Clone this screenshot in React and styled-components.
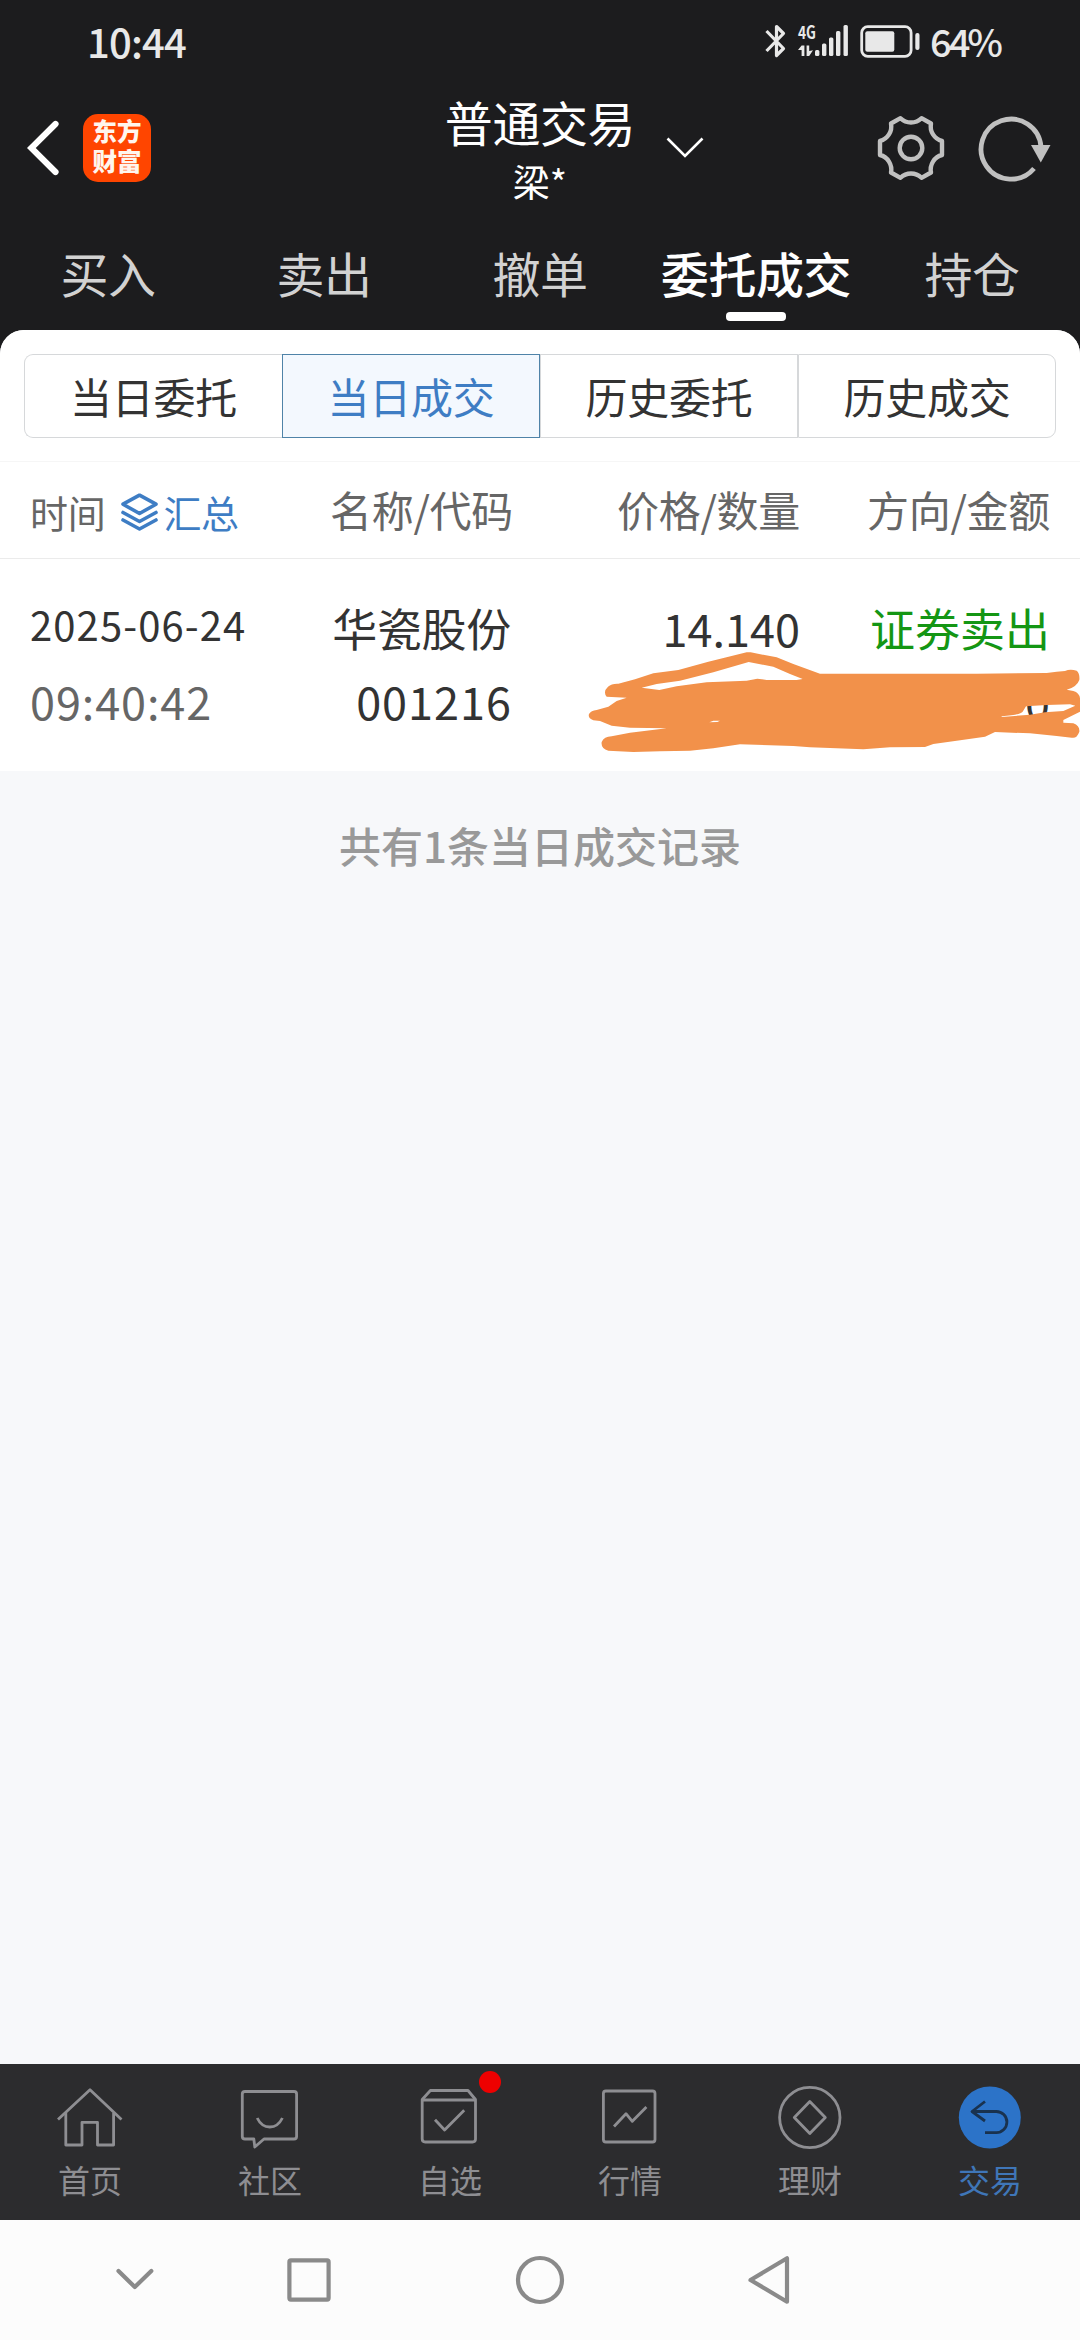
import React, { useState } from "react";
import styled, { createGlobalStyle, css } from "styled-components";

const GlobalStyle = createGlobalStyle`
  * {
    box-sizing: border-box;
  }
  body {
    margin: 0;
    background-color: #f7f8fa;
    font-family: "Noto Sans CJK SC", "Noto Sans", sans-serif;
  }
  svg {
    display: block;
    flex: none;
  }
`;

const Container = styled.div`
  display: flex;
  flex-direction: column;
  width: 1080px;
  height: 2340px;
  overflow: hidden;
  background-color: #1c1c1e;
`;

const StatusBar = styled.div`
  display: flex;
  align-items: center;
  height: 81px;
  padding-left: 87px;
  color: #e8e8e8;
`;

const Clock = styled.span`
  font-size: 40px;
  font-weight: 500;
  line-height: 60px;
  letter-spacing: -0.8px;
`;

const StatusIcons = styled.div`
  display: flex;
  align-items: center;
  width: 315px;
  margin-left: auto;
`;

const SignalIcon = styled.svg`
  margin-left: 12px;
  overflow: visible;
`;

const BatteryIcon = styled.svg`
  margin-left: 11px;
`;

const BatteryText = styled.span`
  margin-left: 9px;
  font-size: 38px;
  font-weight: 500;
  line-height: 60px;
  letter-spacing: -3px;
`;

const Header = styled.div`
  display: grid;
  grid-template-columns: 1fr auto 1fr;
  align-items: center;
  height: 134px;
  padding: 0 27px;
  color: #ffffff;
`;

const HeaderSide = styled.div`
  display: flex;
  align-items: center;
`;

const Logo = styled.div`
  width: 68px;
  height: 68px;
  margin-left: 24px;
  padding-top: 2px;
  border-radius: 15px;
  background-color: #ff4500;
  color: #fff6ee;
  font-size: 24.5px;
  font-weight: 900;
  line-height: 30px;
  text-align: center;
`;

const TitleContainer = styled.div`
  margin-top: 4px;
  text-align: center;
`;

const Title = styled.div`
  font-size: 48px;
  line-height: 62px;
  letter-spacing: -0.4px;
`;

const SubTitle = styled.div`
  font-size: 37px;
  line-height: 58px;
`;

const DownIcon = styled.svg`
  margin: 0 auto 0 31px;
`;

const RefreshIcon = styled.svg`
  margin-left: 30px;
`;

const Tabs = styled.div`
  display: flex;
  height: 115px;
  padding-top: 17px;
`;

const Tab = styled.div`
  display: flex;
  flex-direction: column;
  align-items: center;
  width: 216px;
  color: ${props => (props.$active ? "#ffffff" : "#d2d2d2")};
  font-size: 48px;
  font-weight: ${props => (props.$active ? 500 : 400)};
  line-height: 80px;
  letter-spacing: -0.4px;
  white-space: nowrap;
  ${props =>
    props.$active &&
    css`
      &::after {
        content: "";
        width: 60px;
        height: 9px;
        border-radius: 4px;
        background-color: #ffffff;
      }
    `}
`;

const Content = styled.div`
  flex: 1;
  border-radius: 24px 24px 0 0;
  background-color: #f7f8fa;
`;

const Sheet = styled.div`
  padding-top: 24px;
  border-radius: 24px 24px 0 0;
  background-color: #ffffff;
`;

const Segments = styled.div`
  display: flex;
  margin: 0 24px 23px;
`;

const Segment = styled.div`
  width: 258px;
  height: 84px;
  border: 1px solid ${props => (props.$active ? "#4f83a8" : "#d6d8da")};
  background-color: ${props => (props.$active ? "#f3f8fe" : "#ffffff")};
  color: ${props => (props.$active ? "#3e7dc4" : "#333333")};
  font-size: 42px;
  line-height: 81px;
  letter-spacing: -0.2px;
  text-align: center;
  &:first-child {
    border-right: none;
    border-radius: 9px 0 0 9px;
  }
  &:last-child {
    border-radius: 0 9px 9px 0;
  }
`;

const columns = css`
  display: grid;
  grid-template-columns: 483px 287px 250px;
  padding: 0 30px;
`;

const TableHead = styled.div`
  ${columns}
  align-items: center;
  height: 98px;
  padding-bottom: 2px;
  border-top: 1px solid #f6f6f6;
  border-bottom: 1px solid #ebebeb;
  color: #666666;
  font-size: 42px;
  line-height: 60px;
  letter-spacing: -0.3px;
`;

const HeadFirst = styled.div`
  display: flex;
  align-items: center;
  justify-content: space-between;
`;

const TimeHead = styled.div`
  display: flex;
  align-items: center;
  padding-top: 5px;
  font-size: 38px;
`;

const Summary = styled.div`
  display: flex;
  align-items: center;
  gap: 5px;
  margin-left: 16px;
  color: #3e7dc4;
`;

const HeadCell = styled.div`
  text-align: right;
`;

const Record = styled.div`
  position: relative;
  height: 212px;
  padding-top: 32px;
`;

const RecordLine = styled.div`
  ${columns}
  height: 73px;
  font-size: 45px;
  line-height: 73px;
  color: #333333;
`;

const RecordFirst = styled.div`
  display: flex;
  justify-content: space-between;
`;

const DateText = styled.span`
  font-size: 40px;
  line-height: 67px;
  letter-spacing: 1.1px;
`;

const TimeText = styled.span`
  color: #666666;
  letter-spacing: 0.9px;
`;

const Name = styled.span`
  margin-right: 2px;
  letter-spacing: -0.3px;
`;

const Code = styled.span`
  margin-right: 1px;
  letter-spacing: 1px;
`;

const Cell = styled.div`
  grid-column: ${props => props.$column};
  text-align: right;
  color: ${props => (props.$sell ? "#149614" : "#333333")};
`;

// marker strokes drawn over the quantity and amount
const Scribble = styled.svg`
  position: absolute;
  top: 81px;
  left: 580px;
`;

const Footnote = styled.div`
  padding-top: 44px;
  color: #999999;
  font-size: 42px;
  font-weight: 500;
  line-height: 60px;
  text-align: center;
`;

const TabBar = styled.div`
  display: flex;
  height: 156px;
  background-color: #2c2c2e;
`;

const TabItem = styled.div`
  position: relative;
  display: flex;
  flex-direction: column;
  align-items: center;
  gap: 6px;
  width: 180px;
  padding-top: 17px;
  color: ${props => (props.$active ? "#3f76b8" : "#8e8e92")};
  font-size: 32px;
  line-height: 40px;
`;

const Badge = styled.span`
  position: absolute;
  top: 7px;
  left: 119px;
  width: 22px;
  height: 22px;
  border-radius: 50%;
  background-color: #ee0000;
`;

const SystemNav = styled.div`
  display: grid;
  grid-template-columns: 174px 231px 229px 60px;
  align-items: center;
  height: 120px;
  padding-left: 105px;
  background-color: #fcfcfc;
`;

const TabIcon = ({ children }) => (
  <svg
    width="72"
    height="72"
    viewBox="0 0 72 72"
    fill="none"
    stroke="currentColor"
    strokeWidth="2.8"
    strokeLinejoin="round"
  >
    {children}
  </svg>
);

const NavIcon = ({ children }) => (
  <svg
    width="60"
    height="60"
    viewBox="0 0 60 60"
    fill="none"
    stroke="#8a8a8a"
    strokeWidth="4.2"
    strokeLinecap="round"
    strokeLinejoin="round"
  >
    {children}
  </svg>
);

const tabs = ["买入", "卖出", "撤单", "委托成交", "持仓"];
const segments = ["当日委托", "当日成交", "历史委托", "历史成交"];

const menus = [
  {
    name: "首页",
    icon: (
      <>
        <path d="M4 38.5L36 8.8L67.5 38.5" />
        <path d="M11.8 32V64H28V41.3H43.5V64H59.6V32" />
      </>
    )
  },
  {
    name: "社区",
    icon: (
      <>
        <path d="M11 10.5H60Q62.6 10.5 62.6 13V55.5Q62.6 58 60 58H30L20.8 66L19.8 58H11Q8.3 58 8.3 55.5V13Q8.3 10.5 11 10.5Z" />
        <path d="M23.2 37Q27.5 46 35.8 46Q44 46 48.4 37" />
      </>
    )
  },
  {
    name: "自选",
    badge: true,
    icon: (
      <>
        <path d="M8.2 18.5L16.4 9.5H54L61.5 18.5V58Q61.5 61 58.5 61H11.2Q8.2 61 8.2 58Z" />
        <path d="M8.2 19H61.5" />
        <path d="M21 38.7L30.6 49L50.2 29.3" />
      </>
    )
  },
  {
    name: "行情",
    icon: (
      <>
        <rect x="9.4" y="10" width="51.6" height="51" rx="2.5" />
        <path d="M20 45.5L32 32.7L38.3 40.3L52.4 26" />
      </>
    )
  },
  {
    name: "理财",
    icon: (
      <>
        <circle cx="35.8" cy="36.5" r="30.2" />
        <path d="M35.8 20.5L51.3 36.5L35.8 52.5L20.3 36.5Z" />
      </>
    )
  },
  {
    name: "交易",
    icon: (
      <>
        <circle cx="35.8" cy="36.5" r="31" fill="#2c73c8" stroke="none" />
        <path
          d="M31 20.5L18 30.5L31 40M18 30.5H42.3A10.6 10.6 0 0 1 42.3 51.7H31"
          stroke="#19324f"
        />
      </>
    )
  }
];

export default () => {
  const [tab, setTab] = useState("委托成交");
  const [segment, setSegment] = useState("当日成交");
  const [menu, setMenu] = useState("交易");

  return (
    <Container>
      <GlobalStyle />
      <StatusBar>
        <Clock>10:44</Clock>
        <StatusIcons>
          <svg
            width="21"
            height="34"
            viewBox="0 0 21 34"
            fill="none"
            stroke="currentColor"
            strokeWidth="3.2"
            strokeLinejoin="round"
          >
            <path d="M1.5 7L18.5 24.5L11.5 31.5V2.5L18.5 9.5L1.5 27" />
          </svg>
          <SignalIcon
            width="51"
            height="34"
            viewBox="0 0 51 34"
            fill="currentColor"
          >
            <text
              x="0"
              y="14.5"
              fontSize="18"
              fontWeight="700"
              textLength="18"
              lengthAdjust="spacingAndGlyphs"
            >
              4G
            </text>
            <path d="M3.6 21.5H6.4V32H3.6V26H0Z" />
            <path d="M8.6 21.5H11.2V27L15 26.2L11.2 32H8.6Z" />
            <rect x="17" y="26" width="4.4" height="6" rx="1.5" />
            <rect x="24" y="19.5" width="4.4" height="12.5" rx="1.5" />
            <rect x="31" y="13.5" width="4.4" height="18.5" rx="1.5" />
            <rect x="38" y="7" width="4.4" height="25" rx="1.5" />
            <rect x="45.5" y="1" width="4.4" height="31" rx="1.5" />
          </SignalIcon>
          <BatteryIcon width="61" height="34" viewBox="0 0 61 34" fill="none">
            <rect
              x="1.7"
              y="2.7"
              width="49.4"
              height="29.6"
              rx="6"
              stroke="currentColor"
              strokeWidth="2.8"
            />
            <rect
              x="5.3"
              y="7.3"
              width="29"
              height="20.4"
              rx="2"
              fill="currentColor"
            />
            <rect
              x="55.3"
              y="9"
              width="4.2"
              height="17"
              rx="2"
              fill="currentColor"
            />
          </BatteryIcon>
          <BatteryText>64%</BatteryText>
        </StatusIcons>
      </StatusBar>

      <Header>
        <HeaderSide>
          <svg
            width="32"
            height="56"
            viewBox="0 0 32 56"
            fill="none"
            stroke="currentColor"
            strokeWidth="6.2"
            strokeLinecap="round"
          >
            <path d="M28.5 4L4.3 28L28.5 52" />
          </svg>
          <Logo>
            东方
            <br />
            财富
          </Logo>
        </HeaderSide>
        <TitleContainer>
          <Title>普通交易</Title>
          <SubTitle>梁*</SubTitle>
        </TitleContainer>
        <HeaderSide>
          <DownIcon
            width="38"
            height="22"
            viewBox="0 0 38 22"
            fill="none"
            stroke="currentColor"
            strokeWidth="2.6"
          >
            <path d="M1.5 1.5L19 19L36.5 1.5" />
          </DownIcon>
          <svg
            width="70"
            height="70"
            viewBox="-35 -35 70 70"
            fill="none"
            stroke="#c0c0c0"
            strokeWidth="4.4"
            strokeLinejoin="round"
          >
            <path d="M-10.5 -29.8L-20 -24.5A15 15 0 0 1 -31 -7V7A15 15 0 0 1 -20 24.5L-10.5 29.8A15 15 0 0 1 10.5 29.8L20 24.5A15 15 0 0 1 31 7V-7A15 15 0 0 1 20 -24.5L10.5 -29.8A15 15 0 0 1 -10.5 -29.8Z" />
            <circle r="11.3" />
          </svg>
          <RefreshIcon width="77" height="70" viewBox="-35 -35 77 70">
            <path
              d="M23 20.5A30 30 0 1 1 30 -1"
              fill="none"
              stroke="#c0c0c0"
              strokeWidth="4.8"
            />
            <path d="M20 -3H39.5L29.8 14.5Z" fill="#c0c0c0" />
          </RefreshIcon>
        </HeaderSide>
      </Header>

      <Tabs>
        {tabs.map(name => (
          <Tab key={name} $active={name === tab} onClick={() => setTab(name)}>
            {name}
          </Tab>
        ))}
      </Tabs>

      <Content>
        <Sheet>
          <Segments>
            {segments.map(name => (
              <Segment
                key={name}
                $active={name === segment}
                onClick={() => setSegment(name)}
              >
                {name}
              </Segment>
            ))}
          </Segments>
          <TableHead>
            <HeadFirst>
              <TimeHead>
                时间
                <Summary>
                  <svg
                    width="37"
                    height="38"
                    viewBox="0 0 37 38"
                    fill="none"
                    stroke="currentColor"
                    strokeWidth="3.6"
                    strokeLinecap="round"
                    strokeLinejoin="round"
                  >
                    <path d="M18.5 2.2L35 11.2L18.5 20.5L2 11.2Z" />
                    <path d="M2 19.5L18.5 28.5L35 19.5" />
                    <path d="M2 27L18.5 36L35 27" />
                  </svg>
                  汇总
                </Summary>
              </TimeHead>
              <span>名称/代码</span>
            </HeadFirst>
            <HeadCell>价格/数量</HeadCell>
            <HeadCell>方向/金额</HeadCell>
          </TableHead>
          <Record>
            <RecordLine>
              <RecordFirst>
                <DateText>2025-06-24</DateText>
                <Name>华瓷股份</Name>
              </RecordFirst>
              <Cell $column={2}>14.140</Cell>
              <Cell $column={3} $sell>
                证券卖出
              </Cell>
            </RecordLine>
            <RecordLine>
              <RecordFirst>
                <TimeText>09:40:42</TimeText>
                <Code>001216</Code>
              </RecordFirst>
              <Cell $column={3}>0</Cell>
            </RecordLine>
            <Scribble
              width="500"
              height="130"
              viewBox="0 0 1500 390"
              fill="#f2914a"
              fillRule="evenodd"
            >
              <path d="M80 170Q68 155 84 140Q95 130 115 131L165 118L220 100L295 90L385 65L500 37H512L590 52L640 72L720 101H1190L1400 99L1430 95L1455 93Q1470 86 1490 92Q1500 100 1498 120Q1490 142 1460 149L1480 153Q1498 158 1500 175V215L1450 240V248L1480 250Q1500 258 1498 275Q1490 297 1475 293L1430 288L1350 280L1245 276L1215 290L1130 302L1060 312L1035 321L930 322L850 328L770 325L690 322L640 318L480 313L400 325L330 332L240 334L160 336L85 332Q62 325 65 306Q72 290 95 289L150 278L260 265L150 263L95 257L60 243L40 241Q23 235 27 222Q33 212 50 210L85 200L110 183L140 173ZM185 143L238 150L290 139L380 127L500 122L532 116L560 120H650L668 117L630 102L580 80L506 66L400 97L300 122L230 132ZM1265 231L1350 224L1395 217L1450 213L1486 197L1470 193L1400 195L1338 199L1328 215Q1320 225 1265 229ZM388 247L400 242L420 242L412 246Z" />
            </Scribble>
          </Record>
        </Sheet>
        <Footnote>共有1条当日成交记录</Footnote>
      </Content>

      <TabBar>
        {menus.map(({ name, icon, badge }) => (
          <TabItem
            key={name}
            $active={name === menu}
            onClick={() => setMenu(name)}
          >
            <TabIcon>{icon}</TabIcon>
            {name}
            {badge && <Badge />}
          </TabItem>
        ))}
      </TabBar>

      <SystemNav>
        <NavIcon>
          <path d="M13.5 21L29.8 37L46.3 21" />
        </NavIcon>
        <NavIcon>
          <rect x="10.4" y="10.4" width="39.2" height="39.2" rx="1.5" />
        </NavIcon>
        <NavIcon>
          <circle cx="30" cy="30" r="22" />
        </NavIcon>
        <NavIcon>
          <path d="M11.5 30L48 8.3V51.7Z" />
        </NavIcon>
      </SystemNav>
    </Container>
  );
};
